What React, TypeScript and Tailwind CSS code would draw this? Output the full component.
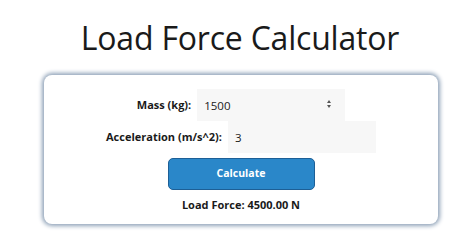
import { useState } from "react";

export default function App() {
  const [mass, setMass] = useState("1500");
  const [accel, setAccel] = useState("3");
  const [force, setForce] = useState(4500);

  const handleCalculate = () => {
    const m = parseFloat(mass);
    const a = parseFloat(accel);
    if (!isNaN(m) && !isNaN(a)) setForce(m * a);
  };

  return (
    <div className="w-[474px] h-[252px] bg-white flex flex-col items-center font-['Open_Sans',sans-serif] text-[#1a1a1a]">
      {/* Header */}
      <h1 className="mt-[15px] ml-[6px] text-[32px] leading-[45px] tracking-[-0.2px]">Load Force Calculator</h1>

      {/* Card */}
      <div className="mt-[15px] ml-[8px] w-[394px] h-[149px] rounded-[8px] bg-white shadow-[0_0_4px_2px_#8fa2b8] flex flex-col items-center pt-[14px]">
        <div className="flex items-center gap-[6px]">
          <label className="text-[11px] font-bold">Mass (kg):</label>
          <div className="relative w-[148px] h-[32px] bg-[#f7f7f7]">
            <input
              value={mass}
              onChange={(e) => setMass(e.target.value)}
              className="w-full h-full bg-transparent px-[7px] text-[11.5px] outline-none"
            />
            <div className="absolute right-[14px] top-[11px] flex flex-col items-center gap-[2px]">
              <span className="block w-0 h-0 border-l-[2.5px] border-r-[2.5px] border-b-[3px] border-l-transparent border-r-transparent border-b-[#555]" />
              <span className="block w-0 h-0 border-l-[2.5px] border-r-[2.5px] border-t-[3px] border-l-transparent border-r-transparent border-t-[#555]" />
            </div>
          </div>
        </div>

        <div className="flex items-center gap-[6px]">
          <label className="text-[11px] font-bold">Acceleration (m/s^2):</label>
          <div className="w-[148px] h-[32px] bg-[#f7f7f7]">
            <input
              value={accel}
              onChange={(e) => setAccel(e.target.value)}
              className="w-full h-full bg-transparent px-[7px] text-[11.5px] outline-none"
            />
          </div>
        </div>

        <button
          onClick={handleCalculate}
          className="mt-[5px] w-[147px] h-[32px] rounded-[5px] bg-[#2a87c9] border border-[#1d5f96] text-white text-[10.5px] font-bold"
        >
          Calculate
        </button>

        <p className="mt-[7px] text-[11px] font-bold">Load Force: {force.toFixed(2)} N</p>
      </div>
    </div>
  );
}
